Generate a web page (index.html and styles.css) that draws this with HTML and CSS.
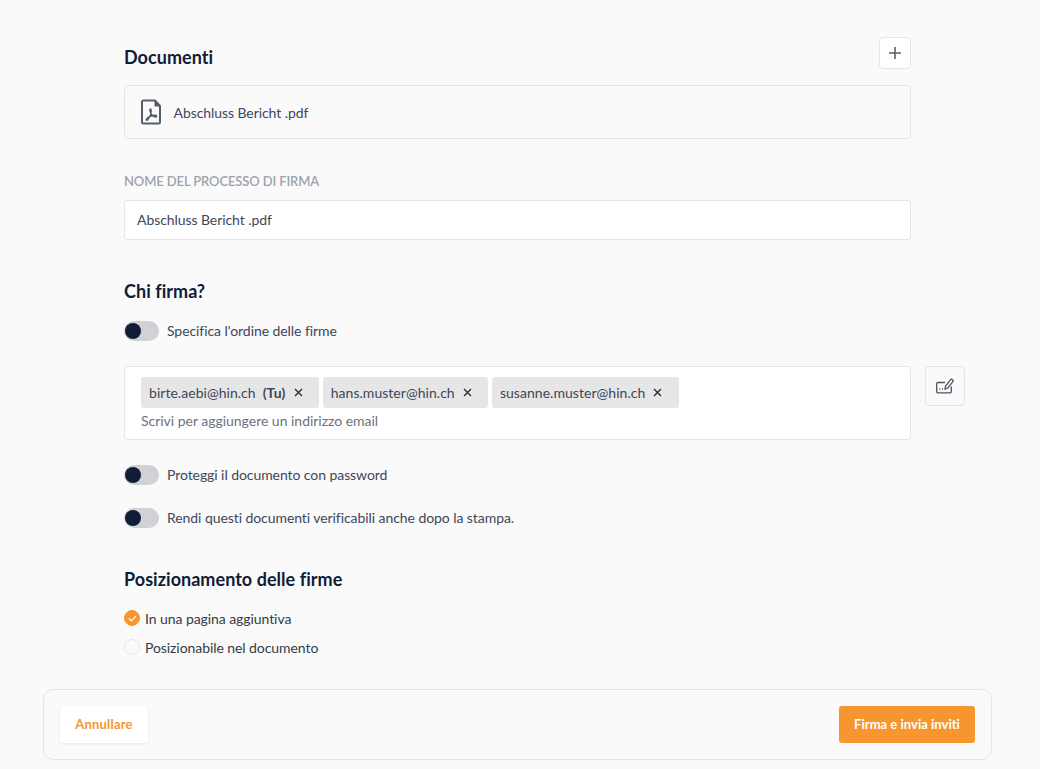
FILE: index.html
```html
<!DOCTYPE html>
<html lang="it">
<head>
<meta charset="utf-8">
<title>Firma</title>
<link rel="stylesheet" href="styles.css">
</head>
<body>
<main class="content">
  <div class="head-row">
    <h2 class="title">Documenti</h2>
    <button class="icon-btn plus-btn" aria-label="Aggiungi">
      <svg width="14" height="14" viewBox="0 0 14 14"><path d="M7 1v12M1 7h12" stroke="#5b6270" stroke-width="1.600" fill="none"/></svg>
    </button>
  </div>
  <div class="file-box">
    <svg class="pdf-icon" width="20" height="26" viewBox="0 0 20 26" fill="none" stroke="#555c6b">
      <path d="M3 1.500h11L19 7v16a1.500 1.500 0 0 1-1.500 1.500h-15A1.500 1.500 0 0 1 1 23V3a1.500 1.500 0 0 1 2-1.500z" stroke-width="2" stroke-linejoin="round"/>
      <path d="M14 2v5h5z" fill="#555c6b" stroke-width="1"/>
      <path d="M9.500 10c-.8 0-.8 2 .2 4c.9 2 2.500 3.700 5 4c1.500.2 1.200-1.800-.7-1.800c-3 0-6.500 1.500-8.500 3.800c-.9 1.100.5 1.900 1.400.7c1.700-2.200 3.200-5.200 3.300-8.300c0-1.400-.2-2.400-.7-2.400z" stroke-width="1.400"/>
    </svg>
    <span class="file-name">Abschluss Bericht .pdf</span>
  </div>

  <label class="field-label" for="name">NOME DEL PROCESSO DI FIRMA</label>
  <input class="text-input" id="name" value="Abschluss Bericht .pdf">

  <h2 class="title section-chi">Chi firma?</h2>
  <div class="toggle-row first">
    <span class="toggle"><span class="knob"></span></span>
    <span>Specifica l'ordine delle firme</span>
  </div>

  <div class="recipients">
    <div class="email-box">
      <div class="chips">
        <span class="chip">birte.aebi@hin.ch <b class="you">(Tu)</b><svg class="x" width="9" height="9" viewBox="0 0 9 9"><path d="M1 1l7 7M8 1l-7 7" stroke="#1f2937" stroke-width="1.300" fill="none"/></svg></span>
        <span class="chip">hans.muster@hin.ch<svg class="x" width="9" height="9" viewBox="0 0 9 9"><path d="M1 1l7 7M8 1l-7 7" stroke="#1f2937" stroke-width="1.300" fill="none"/></svg></span>
        <span class="chip">susanne.muster@hin.ch<svg class="x" width="9" height="9" viewBox="0 0 9 9"><path d="M1 1l7 7M8 1l-7 7" stroke="#1f2937" stroke-width="1.300" fill="none"/></svg></span>
      </div>
      <div class="placeholder">Scrivi per aggiungere un indirizzo email</div>
    </div>
    <button class="icon-btn sign-btn" aria-label="Firma">
      <svg width="18" height="16" viewBox="0 0 18 16" fill="none" stroke="#4b5563" stroke-width="1.300">
        <path d="M9 4.500H2a1.300 1.300 0 0 0-1.300 1.300V13.500A1.300 1.300 0 0 0 2 14.800h12A1.300 1.300 0 0 0 15.300 13.500V8.500"/>
        <path d="M9 11l.6-3L14.600 1.700a1.100 1.100 0 0 1 1.600-.2l.6.500a1.100 1.100 0 0 1 .1 1.600L11.800 10z"/>
        <path d="M3.500 11h1M6 11h1"/>
      </svg>
    </button>
  </div>

  <div class="toggle-row pw">
    <span class="toggle"><span class="knob"></span></span>
    <span>Proteggi il documento con password</span>
  </div>
  <div class="toggle-row verify">
    <span class="toggle"><span class="knob"></span></span>
    <span>Rendi questi documenti verificabili anche dopo la stampa.</span>
  </div>

  <h2 class="title section-pos">Posizionamento delle firme</h2>
  <div class="radio-row r1">
    <span class="radio on"><svg width="9" height="7" viewBox="0 0 9 7"><path d="M1 3.500l2.300 2.300L8 1" stroke="#fff" stroke-width="1.200" fill="none"/></svg></span>
    <span class="radio-text">In una pagina aggiuntiva</span>
  </div>
  <div class="radio-row r2">
    <span class="radio"></span>
    <span class="radio-text">Posizionabile nel documento</span>
  </div>
</main>

<footer class="footer">
  <button class="btn btn-cancel">Annullare</button>
  <button class="btn btn-primary">Firma e invia inviti</button>
</footer>
</body>
</html>
```
FILE: styles.css
```css
* { box-sizing: border-box; }
html, body { height: 100%; }
body {
  margin: 0;
  background: #fafafa;
  font-family: Lato, "Liberation Sans", sans-serif;
  color: #3d4759;
  font-size: 14px;
  line-height: 20px;
  letter-spacing: -0.07px;
  overflow: hidden;
}
.content {
  width: 787px;
  margin-left: 124px;
  padding-top: 37px;
}
.title {
  margin: 0;
  font-size: 18px;
  line-height: 24px;
  font-weight: 700;
  letter-spacing: 0.04px;
  color: #111c36;
}
.head-row {
  display: flex;
  justify-content: space-between;
  align-items: flex-start;
  height: 48px;
}
.head-row .title { margin-top: 8px; }
.icon-btn {
  display: flex;
  align-items: center;
  justify-content: center;
  padding: 0;
  background: #fff;
  border: 1px solid #e5e5e5;
  border-radius: 4px;
}
.plus-btn { width: 32px; height: 32px; }
.file-box {
  display: flex;
  align-items: center;
  height: 54px;
  padding-left: 16px;
  border: 1px solid #e5e5e5;
  border-radius: 4px;
}
.pdf-icon { margin-right: 12.500px; }
.file-name { padding-top: 2px; }
.field-label {
  display: block;
  margin-top: 32px;
  font-size: 13px;
  font-weight: 600;
  line-height: 20px;
  letter-spacing: -0.12px;
  color: #9ea3ae;
}
.text-input {
  display: block;
  width: 100%;
  height: 40px;
  margin-top: 9px;
  padding: 0 12px 2px;
  background: #fff;
  border: 1px solid #e5e5e5;
  border-radius: 3px;
  font: inherit;
  letter-spacing: inherit;
  color: #3d4759;
  outline: none;
}
.section-chi { margin-top: 39px; }
.toggle-row {
  display: flex;
  align-items: center;
  gap: 8px;
  height: 20px;
}
.toggle-row.first { margin-top: 18px; }
.toggle-row.pw { margin-top: 25px; }
.toggle-row.verify { margin-top: 23px; }
.toggle {
  display: block;
  width: 35px;
  height: 20px;
  border-radius: 10px;
  background: #d1d2d6;
  position: relative;
}
.knob {
  position: absolute;
  left: 1px;
  top: 2px;
  width: 16px;
  height: 16px;
  border-radius: 50%;
  background: #111c36;
}
.recipients {
  position: relative;
  margin-top: 25px;
}
.email-box {
  height: 74px;
  padding: 10px 16px 0;
  background: #fff;
  border: 1px solid #e5e5e5;
  border-radius: 4px;
}
.chips {
  display: flex;
  gap: 4px;
}
.chip {
  display: inline-flex;
  align-items: center;
  height: 31px;
  padding: 0 16.200px 0 8px;
  background: #e6e6e6;
  border-radius: 3px;
  white-space: nowrap;
  letter-spacing: 0.04px;
}
.you { margin-left: 7px; font-weight: 700; }
.x { margin-left: 8px; }
.placeholder {
  margin-top: 3px;
  color: #6b7280;
  letter-spacing: -0.02px;
}
.sign-btn {
  position: absolute;
  left: 801px;
  top: 0;
  width: 40px;
  height: 40px;
  background: #fafafa;
}
.section-pos { margin-top: 39px; }
.radio-row {
  display: flex;
  align-items: center;
  gap: 5px;
  height: 20px;
  color: #333a45;
}
.radio-text { padding-top: 2px; }
.r1 { margin-top: 17px; }
.r2 { margin-top: 9px; }
.radio {
  display: flex;
  align-items: center;
  justify-content: center;
  width: 16px;
  height: 16px;
  border-radius: 50%;
  border: 1px solid #e8e8e8;
}
.radio.on {
  background: #f7962e;
  border-color: #f7962e;
}
.footer {
  position: absolute;
  left: 43px;
  top: 689px;
  width: 949px;
  height: 71px;
  display: flex;
  align-items: center;
  justify-content: space-between;
  padding: 0 16px;
  background: #fafafa;
  border: 1px solid #e5e5e5;
  border-radius: 10px;
}
.btn {
  height: 37px;
  padding: 0 0 2px;
  border: 0;
  border-radius: 3px;
  font: 700 13px/20px Lato, "Liberation Sans", sans-serif;
}
.btn-cancel {
  width: 88px;
  background: #fff;
  color: #f7962e;
  letter-spacing: 0.2px;
  box-shadow: 0 1px 3px rgba(0,0,0,.08);
}
.btn-primary {
  width: 136px;
  background: #f7962e;
  color: #fff;
  letter-spacing: 0.02px;
}
```
